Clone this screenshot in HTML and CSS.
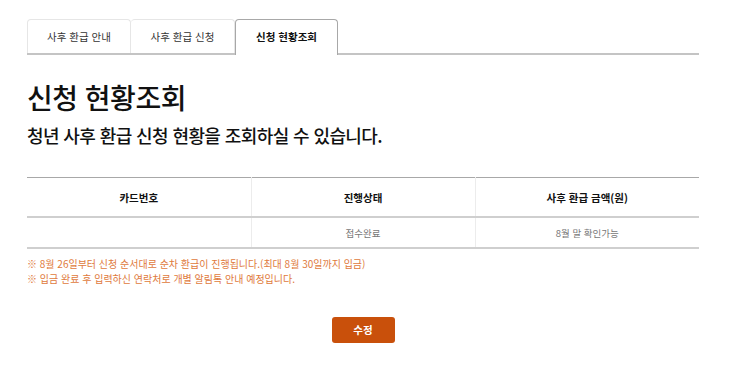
FILE: index.html
```html
<!DOCTYPE html>
<html lang="ko">
<head>
  <meta charset="UTF-8">
  <meta name="viewport" content="width=device-width, initial-scale=1.0">
  <title>신청 현황조회</title>
  <link rel="stylesheet" href="styles.css">
</head>
<body>
  <div class="wrap">
    <ul class="tabs">
      <li><a href="#">사후 환급 안내</a></li>
      <li><a href="#">사후 환급 신청</a></li>
      <li class="on"><a href="#">신청 현황조회</a></li>
    </ul>

    <h2 class="title">신청 현황조회</h2>
    <p class="desc">청년 사후 환급 신청 현황을 조회하실 수 있습니다.</p>

    <table class="status">
      <thead>
        <tr>
          <th>카드번호</th>
          <th>진행상태</th>
          <th>사후 환급 금액(원)</th>
        </tr>
      </thead>
      <tbody>
        <tr>
          <td></td>
          <td>접수완료</td>
          <td>8월 말 확인가능</td>
        </tr>
      </tbody>
    </table>

    <ul class="notes">
      <li>※ 8월 26일부터 신청 순서대로 순차 환급이 진행됩니다.(최대 8월 30일까지 입금)</li>
      <li>※ 입금 완료 후 입력하신 연락처로 개별 알림톡 안내 예정입니다.</li>
    </ul>

    <div class="btns">
      <button type="button">수정</button>
    </div>
  </div>
</body>
</html>
```

FILE: styles.css
```css
body {
  margin: 0;
  font-family: "Noto Sans CJK KR", "Noto Sans", sans-serif;
  background: #fff;
  color: #111;
}
.wrap {
  width: 672px;
  margin-left: 27px;
  padding-top: 19px;
}
.tabs {
  list-style: none;
  margin: 0;
  padding: 0;
  display: flex;
  border-bottom: 2px solid #c4c4c4;
  height: 34px;
}
.tabs li {
  width: 104px;
  border: 1px solid #e6e6e6;
  border-bottom: none;
  border-radius: 4px 4px 0 0;
  box-sizing: border-box;
}
.tabs li + li {
  border-left: none;
}
.tabs li a {
  display: block;
  text-align: center;
  line-height: 34px;
  font-size: 10.5px;
  color: #333;
  text-decoration: none;
}
.tabs li.on {
  width: 103px;
  border: 1px solid #a8a8a8;
  border-bottom: none;
  background: #fff;
  height: 36px;
  position: relative;
  z-index: 1;
}
.tabs li.on a {
  font-weight: bold;
  color: #111;
}
.title {
  margin: 24px 0 0;
  font-size: 28px;
  font-weight: 500;
  line-height: 36px;
  letter-spacing: -0.5px;
}
.desc {
  margin: 8px 0 0;
  font-size: 18px;
  font-weight: 500;
  line-height: 25px;
  letter-spacing: -0.6px;
}
.status {
  width: 100%;
  margin-top: 29px;
  border-collapse: collapse;
  border-top: 1px solid #a8a8a8;
  border-bottom: 2px solid #cfcfcf;
  table-layout: fixed;
}
.status th {
  height: 38px;
  padding: 0;
  font-size: 10.5px;
  font-weight: bold;
  color: #111;
  border-bottom: 2px solid #cfcfcf;
}
.status td {
  height: 29px;
  padding: 0;
  font-size: 9.5px;
  color: #777;
  text-align: center;
}
.status th + th,
.status td + td {
  border-left: 1px solid #ececec;
}
.notes {
  list-style: none;
  margin: 7px 0 0;
  padding: 0;
}
.notes li {
  font-size: 10px;
  line-height: 15px;
  color: #e07a3c;
}
.btns {
  text-align: center;
  margin-top: 29px;
}
.btns button {
  width: 63px;
  height: 26px;
  background: #c9500b;
  color: #fff;
  border: none;
  border-radius: 3px;
  font-family: inherit;
  font-size: 10.5px;
  font-weight: bold;
  cursor: pointer;
}
```
